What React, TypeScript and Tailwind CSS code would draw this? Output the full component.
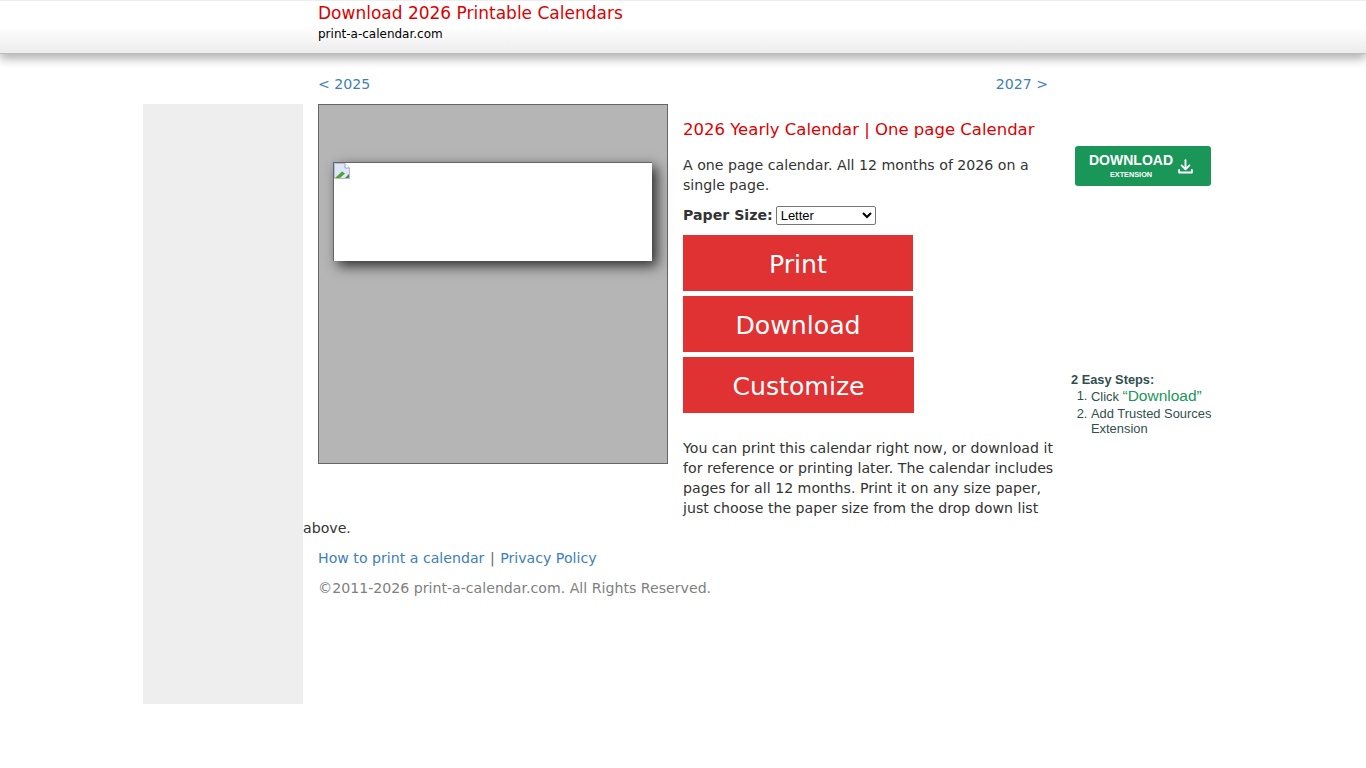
function BrokenImage() {
  return (
    <svg width="16" height="16" viewBox="0 0 16 16" className="block">
      <path d="M0.5 0.5H11L15.5 5V15.5H0.5Z" fill="#dfe6f7" stroke="#b8bcc6" />
      <path d="M11 0.5V5H15.5" fill="#fff" stroke="#9a9fd8" />
      <path d="M1 15L8 8.5L11 10.5L6 15Z" fill="#4fa334" />
      <path d="M11 15L15 11V15Z" fill="#4f8a3a" />
    </svg>
  );
}

function RedButton({ label, width }: { label: string; width: string }) {
  return (
    <button className={`block h-14 ${width} bg-[#e03232] text-white text-[25.2px] leading-[60px] text-center mb-[5px]`}>
      {label}
    </button>
  );
}

export default function App() {
  return (
    <div className="min-h-[768px] bg-white text-[#333] text-[14.15px] leading-5 [font-family:'DejaVu_Sans',Verdana,sans-serif]">
      <header className="h-[54px] border-t border-[#eeeeee] border-b border-b-[#bdbdbd] bg-gradient-to-b from-white from-50% to-[#ececec] shadow-[0_5px_9px_rgba(0,0,0,0.3)] pl-[318px] pt-[1px]">
        <div className="text-[#dd0000] text-[17px] leading-[22px]">Download 2026 Printable Calendars</div>
        <div className="text-black text-[12px] leading-[18px] mt-[1px]">print-a-calendar.com</div>
      </header>

      <nav className="flex justify-between w-[730px] ml-[318px] mt-5 h-[30px] leading-5 text-[#4080b8]">
        <a>&lt; 2025</a>
        <a>2027 &gt;</a>
      </nav>

      <main className="flex ml-[143px]">
        <aside className="w-[160px] h-[600px] bg-[#eeeeee]" />

        <section className="w-[755px]">
          <div className="float-left w-[350px] h-[360px] ml-[15px] mr-[15px] mb-[50px] bg-[#b5b5b5] border border-[#666] pt-[57px] pl-[14px]">
            <div className="w-[319px] h-[99px] bg-white border-t border-l border-[#666] shadow-[5px_5px_12px_rgba(0,0,0,0.75)]">
              <BrokenImage />
            </div>
          </div>

          <h1 className="pt-4 text-[#dd0000] text-[16.5px] leading-5 mb-[15px]">2026 Yearly Calendar | One page Calendar</h1>
          <p className="mb-[10px] pr-2">A one page calendar. All 12 months of 2026 on a single page.</p>
          <div className="flex items-center h-5 mb-[10px]">
            <label className="font-bold mr-[3px]">Paper Size:</label>
            <select className="appearance-auto w-[100px] h-[19px] border border-[#767676] rounded-[2px] bg-white text-black text-[13px] [font-family:'Liberation_Sans',Arial,sans-serif]">
              <option>Letter</option>
            </select>
          </div>
          <RedButton label="Print" width="w-[230px]" />
          <RedButton label="Download" width="w-[230px]" />
          <RedButton label="Customize" width="w-[231px]" />
          <p className="mt-[25px]">
            You can print this calendar right now, or download it for reference or printing later. The calendar includes pages for all 12 months. Print it on any size paper, just choose the paper size from the drop down list above.
          </p>
          <div className="clear-left" />
          <p className="ml-[15px] mt-[10px] text-[#4080b8]">
            <a>How to print a calendar</a> <span className="text-[#666] mx-[1px]">|</span> <a>Privacy Policy</a>
          </p>
          <p className="ml-[15px] mt-[10px] text-[#808080]">©2011-2026 print-a-calendar.com. All Rights Reserved.</p>
        </section>

        <aside className="w-[150px] ml-[12px] [font-family:'Liberation_Sans',Arial,sans-serif] text-[#2f4f4f]">
          <div className="ml-[5px] mt-[42px] w-[136px] h-10 rounded-[3px] bg-[#1a9659] text-white flex items-center pl-[14px] gap-[4px]">
            <div className="text-center">
              <div className="text-[14px] font-bold leading-[15px] mt-[-1px]">DOWNLOAD</div>
              <div className="text-[7.3px] font-bold leading-[9px] mt-[2px]">EXTENSION</div>
            </div>
            <svg width="17" height="17" viewBox="0 0 24 24" fill="none" stroke="currentColor" strokeWidth="2.6" strokeLinecap="round" strokeLinejoin="round">
              <path d="M12 3v12" />
              <path d="M6.5 10.5 12 16l5.5-5.5" />
              <path d="M3 17v3.5h18V17" />
            </svg>
          </div>
          <div className="ml-[1px] mt-[186px] text-[12.9px] leading-[15px] whitespace-nowrap">
            <div className="font-bold text-[12.8px]">2 Easy Steps:</div>
            <ol className="mt-[1px]">
              <li className="flex"><span className="w-[20px] text-right">1.&nbsp;</span><span>Click <span className="text-[#1a9659] text-[15.5px]">“Download”</span></span></li>
              <li className="flex mt-[2px]"><span className="w-[20px] text-right">2.&nbsp;</span><span>Add Trusted Sources<br />Extension</span></li>
            </ol>
          </div>
        </aside>
      </main>
    </div>
  );
}
